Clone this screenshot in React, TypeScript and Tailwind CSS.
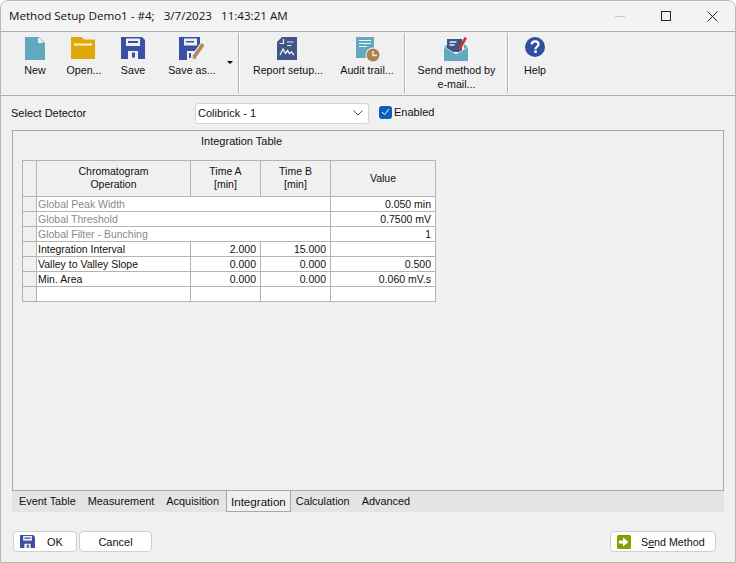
import * as React from "react";

const ui = { fontFamily: '"Liberation Sans", Arial, sans-serif' };

function NewIcon() {
  return (
    <svg width="20" height="23" viewBox="0 0 20 23">
      <path d="M0 0h14l6 6v17H0z" fill="#62a9c0" />
      <path d="M13 1h1.5l3.5 4v1h-5z" fill="#f0f0f0" />
    </svg>
  );
}

function OpenIcon() {
  return (
    <svg width="24" height="22" viewBox="0 0 24 22">
      <path d="M0 0h11l2 2.5h11V22H0z" fill="#e0a70a" />
      <path d="M3 6.5h18v2H3z" fill="#f8f2de" />
    </svg>
  );
}

function FloppyIcon({ size = 24 }: { size?: number }) {
  return (
    <svg width={size} height={size * 0.92} viewBox="0 0 24 22">
      <path d="M0 0h21l3 3v19H0z" fill="#3a50a4" />
      <path d="M5 1.5h14v7.5H5z" fill="#f0f0f0" />
      <path d="M7 4h10v2H7z" fill="#3a50a4" />
      <path d="M7 14h10v8H7z" fill="#f0f0f0" />
      <path d="M11 15.5h3v5h-3z" fill="#3a50a4" />
    </svg>
  );
}

function SaveAsIcon() {
  return (
    <svg width="26" height="23" viewBox="0 0 26 23">
      <path d="M0 0h21v11l-5 12H0z" fill="#3a50a4" />
      <path d="M5 1.5h13v7H5z" fill="#f0f0f0" />
      <path d="M7 4h8v1.5H7z" fill="#3a50a4" />
      <path d="M8 14h8v9H8z" fill="#f0f0f0" />
      <path d="M10 16h2v5h-2z" fill="#3a50a4" />
      <path d="M22 5l4 3-9 13-4 2 0-5z" fill="#f0f0f0" />
      <path d="M22.5 6l3 2.2-8.6 12.6-3 1.5 0-3.8z" fill="#b08a55" />
    </svg>
  );
}

function ReportIcon() {
  return (
    <svg width="20" height="23" viewBox="0 0 20 23">
      <path d="M5 0h15v23H0V5z" fill="#3f5587" />
      <path d="M2.5 6.5h4V2M10 5h6.5M10 8.5h4.5" stroke="#e8edf2" strokeWidth="1.2" fill="none" />
      <path d="M3 18l3-6 2.5 4.5 2-3 2 3 2-1.5 2.5 3" stroke="#e8edf2" strokeWidth="1.4" fill="none" />
    </svg>
  );
}

function AuditIcon() {
  return (
    <svg width="24" height="25" viewBox="0 0 24 25">
      <path d="M0 0h18v21H0z" fill="#62a9c0" />
      <path d="M3 3.5h12M3 6.5h12M3 9.5h8" stroke="#eef4f6" strokeWidth="1.2" />
      <circle cx="17" cy="18" r="7.5" fill="#f0f0f0" />
      <circle cx="17" cy="18" r="6.5" fill="#a9824f" />
      <path d="M17 14v4.5h4" stroke="#f4f0e8" strokeWidth="1.4" fill="none" />
    </svg>
  );
}

function MailIcon() {
  return (
    <svg width="24" height="24" viewBox="0 0 24 24">
      <path d="M0 10l4-3v7zM24 10l-4-3v7z" fill="#62a9c0" />
      <path d="M3 2h15v13H3z" fill="#3f5587" />
      <path d="M5.5 5h7M5.5 8h5" stroke="#eef0f6" strokeWidth="1.3" />
      <path d="M20.5 0l2.5 1.2-6 10.8-2.6 1.5.2-3z" fill="#c8323a" />
      <path d="M0 10l12 7 12-7v14H0z" fill="#62a9c0" />
      <path d="M0 10l12 7 12-7" stroke="#d8e8ee" strokeWidth="0.8" fill="none" />
    </svg>
  );
}

function HelpIcon() {
  return (
    <svg width="20" height="20" viewBox="0 0 20 20">
      <circle cx="10" cy="10" r="10" fill="#2f4ea0" />
      <path d="M6.6 7.4C6.8 5.3 8.2 4.3 10.1 4.3c2 0 3.4 1.1 3.4 2.9 0 2.5-3 2.6-3 5" stroke="#fff" strokeWidth="2.2" fill="none" />
      <rect x="9.2" y="13.4" width="2.6" height="2.5" fill="#fff" />
    </svg>
  );
}

function Tool({ w, icon, label, iconShift = 0 }: { w: number; icon: React.ReactNode; label: React.ReactNode; iconShift?: number }) {
  return (
    <div className="flex flex-col items-center shrink-0" style={{ width: w }}>
      <div className="h-[26px] flex items-start justify-center" style={{ marginLeft: iconShift }}>
        {icon}
      </div>
      <div className="text-[10.7px] leading-[14px] text-center whitespace-nowrap text-[#111]">{label}</div>
    </div>
  );
}

const Sep = () => <div className="w-[2px] h-[60px] bg-[#b4b4b4] border-r border-white shrink-0" />;

const rows = [
  { name: "Global Peak Width", span: true, value: "0.050 min" },
  { name: "Global Threshold", span: true, value: "0.7500 mV" },
  { name: "Global Filter - Bunching", span: true, value: "1" },
  { name: "Integration Interval", a: "2.000", b: "15.000", value: "" },
  { name: "Valley to Valley Slope", a: "0.000", b: "0.000", value: "0.500" },
  { name: "Min. Area", a: "0.000", b: "0.000", value: "0.060 mV.s" },
  { name: "", a: "", b: "", value: "" },
];

const tabs = ["Event Table", "Measurement", "Acquisition", "Integration", "Calculation", "Advanced"];

export default function App() {
  return (
    <div className="w-[736px] h-[563px] bg-[#f0f0f0] flex flex-col overflow-hidden rounded-t-lg border border-[#b8b8b8] text-[11px] leading-[14px] text-[#111]" style={ui}>
      {/* title bar */}
      <div className="h-[30px] flex items-center shrink-0 pl-[8px] bg-[#f3f3f3]">
        <span className="text-[11.6px] whitespace-pre flex-1" style={{ fontFamily: '"Open Sans", sans-serif' }}>
          Method Setup Demo1 - #4;{"   "}3/7/2023{"   "}11:43:21 AM
        </span>
        <div className="w-[46px] flex justify-center"><div className="w-[10px] h-px bg-[#c8c8c8]" /></div>
        <div className="w-[46px] flex justify-center"><div className="w-[10px] h-[10px] border border-[#222]" /></div>
        <div className="w-[46px] flex justify-center">
          <svg width="11" height="11" viewBox="0 0 11 11"><path d="M.5.5l10 10M10.5.5l-10 10" stroke="#222" strokeWidth="1" /></svg>
        </div>
      </div>

      {/* toolbar */}
      <div className="h-[65px] shrink-0 flex items-start pt-[1px] border-y border-[#aeaeae] bg-[#f0f0f0]">
        <div className="w-[237px] shrink-0 flex pt-[4px] pl-[11px] relative">
          <Tool w={46} icon={<NewIcon />} label="New" />
          <Tool w={52} icon={<OpenIcon />} label="Open..." iconShift={-2} />
          <Tool w={46} icon={<FloppyIcon />} label="Save" />
          <Tool w={72} icon={<SaveAsIcon />} label="Save as..." />
          <div className="absolute left-[226px] top-[28px] w-0 h-0 border-x-[3px] border-x-transparent border-t-[3px] border-t-black" />
        </div>
        <Sep />
        <div className="flex pt-[4px] w-[164px] shrink-0">
          <Tool w={96} icon={<ReportIcon />} label="Report setup..." iconShift={-2} />
          <Tool w={62} icon={<AuditIcon />} label="Audit trail..." iconShift={2} />
        </div>
        <Sep />
        <div className="flex pt-[4px] w-[101px] shrink-0">
          <Tool w={101} icon={<MailIcon />} label={<>Send method by<br />e-mail...</>} iconShift={-2} />
        </div>
        <Sep />
        <div className="flex pt-[4px]">
          <Tool w={52} icon={<HelpIcon />} label="Help" />
        </div>
      </div>

      {/* detector row */}
      <div className="h-[34px] shrink-0 flex items-center pl-[10px]">
        <span className="w-[184px]">Select Detector</span>
        <div className="w-[174px] h-[21px] bg-white border border-[#d4d4d4] rounded-[3px] flex items-center justify-between px-[2px]">
          <span>Colibrick - 1</span>
          <svg width="10" height="6" viewBox="0 0 10 6" className="mr-[3px]"><path d="M.5.5L5 5 9.5.5" stroke="#555" fill="none" /></svg>
        </div>
        <div className="ml-[10px] -mt-[2px] w-[13px] h-[13px] rounded-[3px] bg-[#0a5fb8] flex items-center justify-center">
          <svg width="9" height="8" viewBox="0 0 9 8"><path d="M1 4l2.5 2.5L8 1" stroke="#fff" fill="none" /></svg>
        </div>
        <span className="ml-[2px] -mt-[2px]">Enabled</span>
      </div>

      {/* panel */}
      <div className="mx-[11px] h-[361px] shrink-0 border border-[#a8a8a8] pl-[9px]">
        <div className="h-[29px] pl-[179px] pt-[3px] whitespace-nowrap">Integration Table</div>
        <table className="border-collapse table-fixed w-[414px] text-[10.5px]">
          <colgroup>
            <col className="w-[14px]" />
            <col className="w-[154px]" />
            <col className="w-[70px]" />
            <col className="w-[70px]" />
            <col className="w-[105px]" />
          </colgroup>
          <thead>
            <tr className="h-[36px] leading-[13px] font-normal">
              <th className="border border-[#b4b4b4] font-normal bg-[#f0f0f0]" />
              <th className="border border-[#b4b4b4] font-normal pb-[1px]">Chromatogram<br />Operation</th>
              <th className="border border-[#b4b4b4] font-normal pb-[1px]">Time A<br />[min]</th>
              <th className="border border-[#b4b4b4] font-normal pb-[1px]">Time B<br />[min]</th>
              <th className="border border-[#b4b4b4] font-normal">Value</th>
            </tr>
          </thead>
          <tbody>
            {rows.map((r, i) => (
              <tr key={i} className="h-[15px] leading-[13px]">
                <td className="border border-[#b4b4b4] bg-[#f0f0f0] p-0" />
                {r.span ? (
                  <td colSpan={3} className="border border-[#b4b4b4] bg-white text-[#8a8a8a] pl-[1px] p-0 whitespace-nowrap">{r.name}</td>
                ) : (
                  <>
                    <td className="border border-[#b4b4b4] bg-white pl-[1px] p-0 whitespace-nowrap">{r.name}</td>
                    <td className="border border-[#b4b4b4] bg-white text-right pr-[4px] p-0">{r.a}</td>
                    <td className="border border-[#b4b4b4] bg-white text-right pr-[4px] p-0">{r.b}</td>
                  </>
                )}
                <td className="border border-[#b4b4b4] bg-white text-right pr-[4px] p-0">{r.value}</td>
              </tr>
            ))}
          </tbody>
        </table>
      </div>

      {/* tabs */}
      <div className="mx-[11px] h-[21px] shrink-0 w-[712px] bg-[#e4e4e4] flex items-start pl-[1px] text-[10.9px]">
        {tabs.map((t) =>
          t === "Integration" ? (
            <div key={t} className="h-[22px] -mt-px px-[4px] ml-[1px] -mr-px flex items-center bg-[#f0f0f0] border border-[#a8a8a8] pt-[2px] text-[11.6px]">{t}</div>
          ) : (
            <div key={t} className="h-[20px] px-[6px] flex items-center">{t}</div>
          )
        )}
      </div>

      {/* buttons */}
      <div className="flex-1 flex items-start pt-[19px] pl-[12px] pr-[19px]">
        <button className="w-[64px] h-[21px] bg-white border border-[#cfcfcf] rounded-[4px] flex items-center pl-[6px]">
          <FloppyIcon size={15} />
          <span className="ml-[12px]">OK</span>
        </button>
        <button className="ml-[2px] w-[73px] h-[21px] bg-white border border-[#cfcfcf] rounded-[4px]">Cancel</button>
        <button className="ml-auto w-[106px] h-[21px] bg-white border border-[#cfcfcf] rounded-[4px] flex items-center pl-[6px]">
          <svg width="14" height="14" viewBox="0 0 14 14">
            <rect width="14" height="14" rx="1.5" fill="#7ea400" />
            <path d="M2 5.5h4V2.5L11.5 7 6 11.5v-3H2z" fill="#fff" />
          </svg>
          <span className="ml-[10px] text-[10.7px]">S<span className="underline">e</span>nd Method</span>
        </button>
      </div>
    </div>
  );
}
